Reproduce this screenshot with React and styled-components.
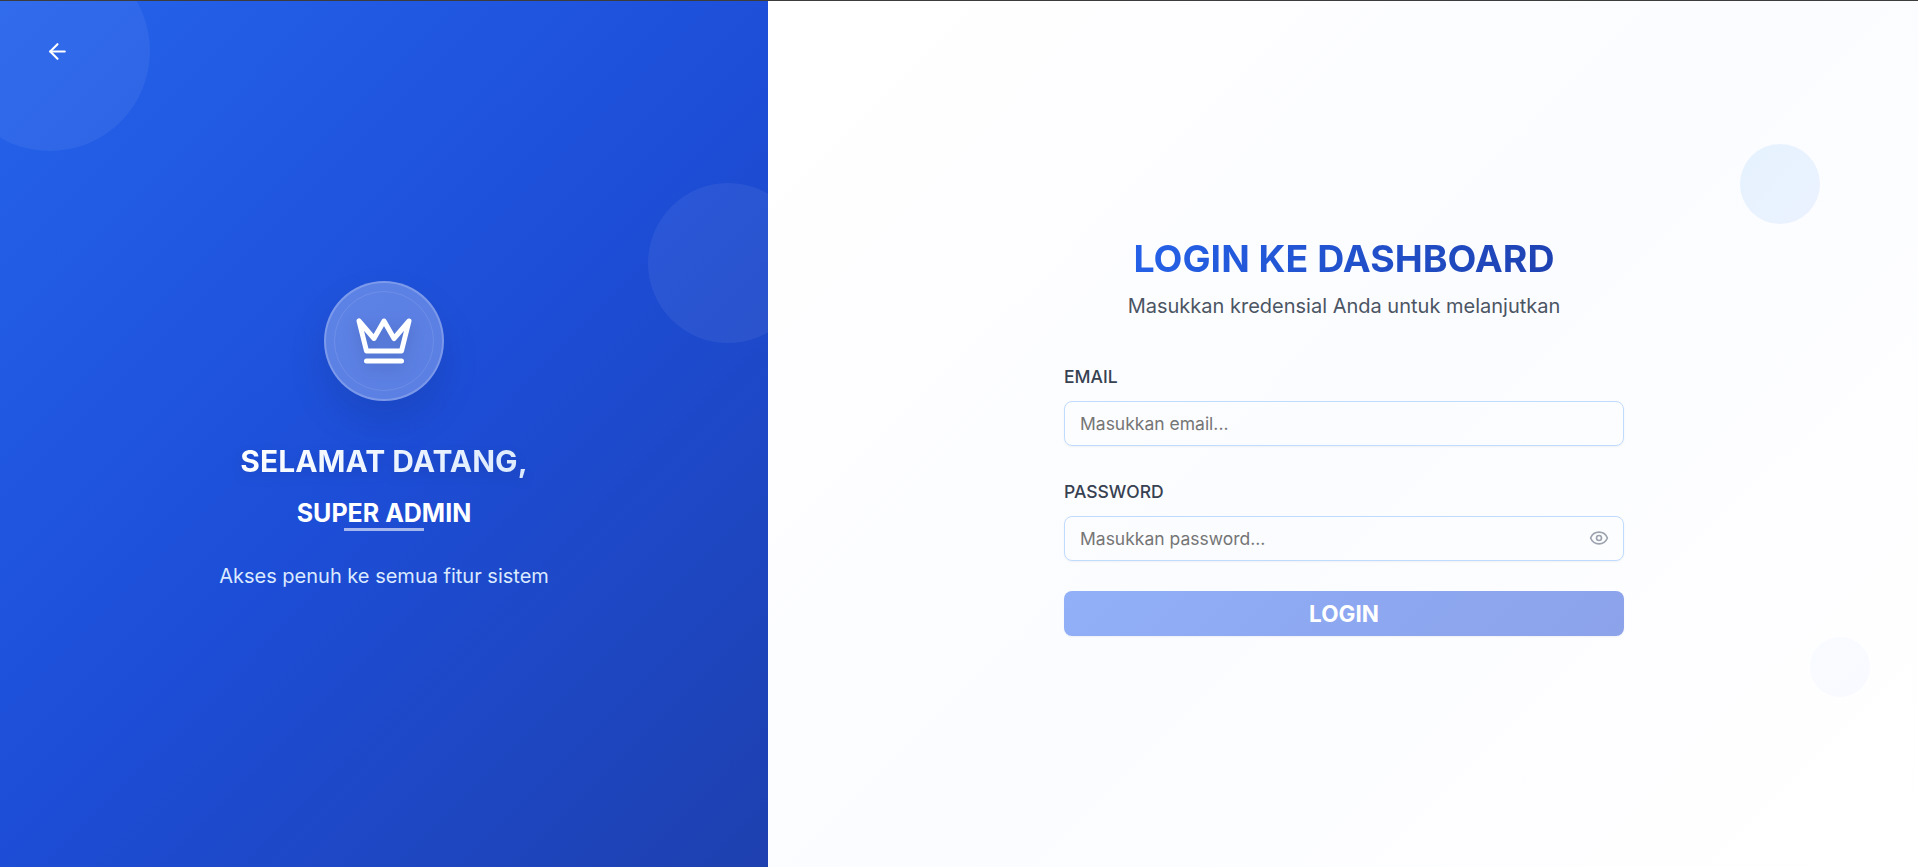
import React, { useState } from "react";
import styled, { createGlobalStyle } from "styled-components";
import { ArrowLeft, Eye } from "lucide-react";

const GlobalStyle = createGlobalStyle`
  *, *::before, *::after { box-sizing: border-box; }
  html, body { margin: 0; padding: 0; overflow: hidden; }
  body, input, button { font-family: Inter, "Liberation Sans", sans-serif; }
  h1, h2, p { margin: 0; }
`;

const Page = styled.main`
  display: grid;
  grid-template-columns: 768px 1152px;
  width: 1920px;
  height: 867px;
  border-top: 1px solid #3c3c3c;
  overflow: hidden;
`;

const Welcome = styled.section`
  position: relative;
  overflow: hidden;
  display: flex;
  flex-direction: column;
  align-items: center;
  padding-top: 280px;
  color: #fff;
  background: linear-gradient(135deg, #2563eb 0%, #1d4ed8 50%, #1e40af 100%);
`;

const Bubble = styled.span`
  position: absolute;
  width: ${(p) => p.$size}px;
  height: ${(p) => p.$size}px;
  top: ${(p) => p.$top}px;
  right: ${(p) => p.$right}px;
  border-radius: 50%;
  background: ${(p) => p.$fill};
`;

const BackButton = styled.button`
  position: absolute;
  top: 38px;
  left: 45px;
  display: flex;
  padding: 0;
  border: 0;
  background: none;
  color: #fff;
`;

const Emblem = styled.div`
  position: relative;
  display: flex;
  align-items: center;
  justify-content: center;
  width: 120px;
  height: 120px;
  flex: none;
  border: 2px solid rgba(255, 255, 255, 0.2);
  border-radius: 50%;
  background: rgba(255, 255, 255, 0.28);
  box-shadow: 0 20px 40px rgba(0, 0, 0, 0.1);

  &::after {
    content: "";
    position: absolute;
    inset: 8px;
    border: 1px solid rgba(255, 255, 255, 0.1);
    border-radius: 50%;
  }

  svg { filter: drop-shadow(0 4px 8px rgba(0, 0, 0, 0.14)); }
`;

const Greeting = styled.h1`
  margin-top: 42px;
  font-size: 30px;
  line-height: 36px;
  font-weight: 700;
  background: linear-gradient(135deg, #ffffff 0%, #dbeafe 100%);
  background-clip: text;
  color: transparent;
  filter: drop-shadow(0 4px 6px rgba(0, 0, 0, 0.1));
`;

const Role = styled.h2`
  position: relative;
  margin-top: 18px;
  font-size: 25px;
  line-height: 32px;
  font-weight: 700;

  &::after {
    content: "";
    position: absolute;
    left: 50%;
    bottom: -2px;
    width: 80px;
    height: 3px;
    transform: translateX(-50%);
    background: rgba(255, 255, 255, 0.6);
  }
`;

const Tagline = styled.p`
  margin-top: 33px;
  font-size: 20px;
  line-height: 28px;
  color: #dbeafe;
`;

const LoginPanel = styled.section`
  position: relative;
  display: flex;
  justify-content: center;
  align-items: flex-start;
  padding-top: 235px;
  background: linear-gradient(135deg, #ffffff 0%, #fbfcff 50%, #ffffff 100%);
`;

const Form = styled.form`
  display: flex;
  flex-direction: column;
  width: 560px;
`;

const Title = styled.h1`
  align-self: center;
  font-size: 37.5px;
  line-height: 46px;
  font-weight: 700;
  background: linear-gradient(135deg, #2563eb 0%, #1e40af 100%);
  background-clip: text;
  color: transparent;
`;

const Hint = styled.p`
  align-self: center;
  margin-top: 10px;
  font-size: 20px;
  line-height: 28px;
  color: #4b5563;
`;

const Field = styled.div`
  display: flex;
  flex-direction: column;
  gap: 12px;
  margin-top: ${(p) => p.$space}px;
`;

const Label = styled.label`
  font-size: 17.5px;
  line-height: 24px;
  font-weight: 500;
  color: #374151;
`;

const InputBox = styled.div`
  display: flex;
  align-items: center;
  height: 45px;
  padding: 0 14px 0 15px;
  border: 1px solid #bfdbfe;
  border-radius: 8px;
  background: rgba(255, 255, 255, 0.1);
  box-shadow: 0 1px 2px rgba(0, 0, 0, 0.05);
`;

const Input = styled.input`
  flex: 1;
  min-width: 0;
  padding: 0;
  border: 0;
  outline: 0;
  background: none;
  font-size: 17.5px;
  color: #111827;

  &::placeholder { color: #757575; opacity: 1; }
`;

const RevealButton = styled.button`
  display: flex;
  padding: 0 0 2px;
  border: 0;
  background: none;
  color: #9ca3af;
`;

const Submit = styled.button`
  height: 45px;
  margin-top: 30px;
  padding: 0;
  border: 0;
  border-radius: 8px;
  background: linear-gradient(135deg, #91b0f8 0%, #8da8f1 50%, #8ca3ea 100%);
  box-shadow: 0 1px 2px rgba(0, 0, 0, 0.05);
  font-size: 22.5px;
  line-height: 27px;
  font-weight: 700;
  color: #fff;
`;

function Crown() {
  return (
    <svg width="60" height="60" viewBox="0 0 24 24" fill="none" stroke="currentColor" strokeWidth="2" strokeLinecap="round" strokeLinejoin="round">
      <path d="m2 4 3 12h14l3-12-6 7-4-7-4 7-6-7zm3 16h14" />
    </svg>
  );
}

export default function App() {
  const [visible, setVisible] = useState(false);
  return (
    <>
      <GlobalStyle />
      <Page>
        <Welcome>
          <Bubble $size={200} $top={-50} $right={618} $fill="rgba(255, 255, 255, 0.06)" />
          <Bubble $size={160} $top={182.3} $right={-40} $fill="rgba(255, 255, 255, 0.06)" />
          <BackButton type="button" aria-label="Kembali">
            <ArrowLeft size={25} strokeWidth={2} />
          </BackButton>
          <Emblem><Crown /></Emblem>
          <Greeting>SELAMAT DATANG,</Greeting>
          <Role>SUPER ADMIN</Role>
          <Tagline>Akses penuh ke semua fitur sistem</Tagline>
        </Welcome>
        <LoginPanel>
          <Bubble $size={80} $top={142.5} $right={100} $fill="linear-gradient(135deg, #e6f2ff, #ebf2ff)" />
          <Bubble $size={60} $top={636.3} $right={50} $fill="linear-gradient(135deg, #f8fbff, #f9faff)" />
          <Form onSubmit={(e) => e.preventDefault()}>
            <Title>LOGIN KE DASHBOARD</Title>
            <Hint>Masukkan kredensial Anda untuk melanjutkan</Hint>
            <Field $space={45}>
              <Label htmlFor="email">EMAIL</Label>
              <InputBox>
                <Input id="email" type="email" placeholder="Masukkan email..." />
              </InputBox>
            </Field>
            <Field $space={34}>
              <Label htmlFor="password">PASSWORD</Label>
              <InputBox>
                <Input id="password" type={visible ? "text" : "password"} placeholder="Masukkan password..." />
                <RevealButton type="button" aria-label="Tampilkan password" onClick={() => setVisible(!visible)}>
                  <Eye size={20} />
                </RevealButton>
              </InputBox>
            </Field>
            <Submit type="submit">LOGIN</Submit>
          </Form>
        </LoginPanel>
      </Page>
    </>
  );
}
